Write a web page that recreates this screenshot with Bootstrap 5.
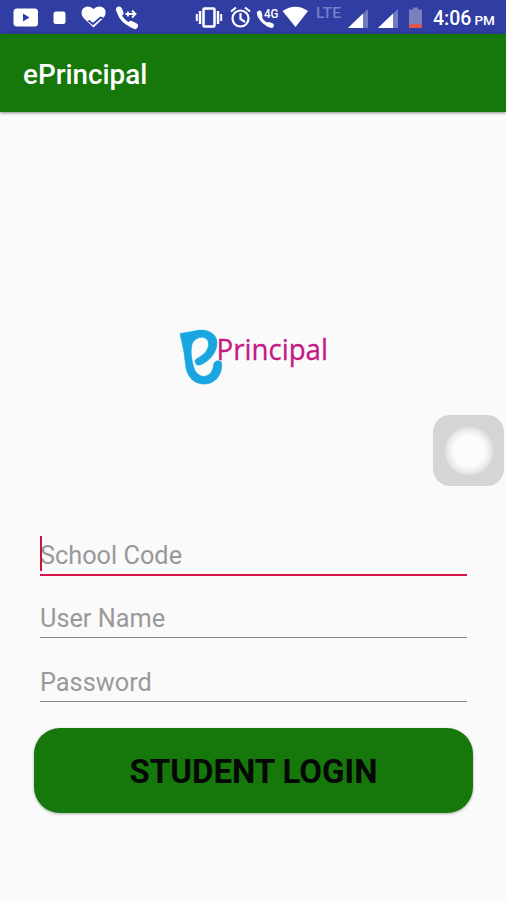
<!DOCTYPE html>
<html lang="en">
<head>
<meta charset="utf-8">
<meta name="viewport" content="width=device-width, initial-scale=1">
<title>ePrincipal</title>
<link href="https://cdn.jsdelivr.net/npm/bootstrap@5.3.0/dist/css/bootstrap.min.css" rel="stylesheet">
<style>
  body { font-family: Roboto, "Liberation Sans", sans-serif; background: #fafafa; height: 900px; overflow: hidden; }
  .status-bar { height: 34px; background: #303da3; padding-left: 12px; }
  .status-bar svg { height: 34px; display: block; flex: none; }
  .clock { font-size: 19.5px; line-height: 34px; font-weight: 500; margin-left: 9px; padding-top: 2px; }
  .clock span { font-size: 13.5px; margin-left: 3px; }
  .app-bar { height: 78px; background: #16780b; padding: 3px 23px 0; box-shadow: 0 1px 3px rgba(0,0,0,.45); }
  .app-title { font-size: 27.8px; font-weight: 500; line-height: 1; }
  .logo-area { height: 418px; padding-top: 213px; }
  .login-form { padding: 0 33px 0 34px; }
  .field { margin: 0 6px 0 6px; height: 64px; position: relative; }
  .field .form-control { height: 45px; font-size: 25.3px; line-height: 38px; color: #444; border-bottom: 1px solid #8a8a8a; padding-top: 7px !important; }
  .field .form-control::placeholder { color: #999; opacity: 1; }
  .field.active { height: 63px; }
  .field.active .form-control { height: 46px; border-bottom: 2px solid #d3154a; padding-top: 6px !important; }
  .field.active::before { content: ""; position: absolute; left: 0; top: 6px; width: 2px; height: 35px; background: #c8153f; z-index: 1; }
  .btn-login, .btn-login:hover { height: 85px; margin-top: 7px; border-radius: 26px; background: #16780b; color: #050805; font-size: 33px; font-weight: 700; padding-top: 9px; box-shadow: 0 1px 3px rgba(0,0,0,.3); }
  .assist { left: 433px; top: 415px; width: 71px; height: 71px; border-radius: 17px; background: #d5d5d5; }
  .assist div { width: 50px; height: 50px; background: radial-gradient(circle, #fcfcfc 0 42%, #f3f3f3 52%, #e5e5e5 64%, #d5d5d5 71%); }
</style>
</head>
<body>
<header>
  <div class="status-bar d-flex text-white">
    <svg width="27" viewBox="12 0 27 34" fill="#fff"><path fill-rule="evenodd" d="M17 8.500H35Q38 8.500 38 12V23Q38 26.500 35 26.500H17Q13.500 26.500 13.500 23V12Q13.500 8.500 17 8.500ZM23 13.500V21.500L29.500 17.500Z"/></svg>
    <svg width="36" viewBox="39 0 36 34"><rect x="53.500" y="11.500" width="12" height="12.500" rx="2.500" fill="#fff"/></svg>
    <svg width="35" viewBox="75 0 35 34"><path d="M93.500 27.500L83.500 18C79 12 83 6.500 88 6.500Q91 6.500 93.500 9Q96 6.500 99 6.500C105 6.500 108 12 103.500 18Z" fill="#fff"/><path d="M88.500 20.500L93 24L100.500 17.500L105 19" fill="none" stroke="#303da3" stroke-width="1.800"/></svg>
    <svg width="80" viewBox="110 0 80 34" fill="none" stroke="#fff"><path d="M119 11C119.500 18 126 24.500 134 25.500" stroke-width="3.500"/><path d="M119 9.500L120.500 13M131 24L135 26" stroke-width="6" stroke-linecap="round"/><path d="M125.500 14H135M128 11.500V16.500M132 10.500L135.500 14L132 17.500" stroke-width="1.800"/></svg>
    <svg width="38" viewBox="190 0 38 34" fill="none" stroke="#fff"><rect x="203.500" y="8.500" width="11" height="18" rx="1" stroke-width="2.500"/><path d="M200 11V24M218 11V24" stroke-width="2.500"/><path d="M196.800 14V21M221.200 14V21" stroke-width="2"/></svg>
    <svg width="26" viewBox="228 0 26 34" fill="none" stroke="#fff" stroke-width="2.200"><circle cx="240.500" cy="18.500" r="8"/><path d="M231 11.500L236 7.500M250 11.500L245 7.500M240.500 13V19L245 22"/></svg>
    <svg width="28" viewBox="254 0 28 34" fill="#fff"><path d="M258.500 12C259 19 265 25 272 26" fill="none" stroke="#fff" stroke-width="3"/><path d="M259.300 13L260 16M268.500 24.500L271.500 25.500" fill="none" stroke="#fff" stroke-width="4.800" stroke-linecap="round"/><text x="264" y="18" font-size="13" font-weight="500" textLength="14.500" lengthAdjust="spacingAndGlyphs">4G</text></svg>
    <svg width="30" viewBox="282 0 30 34"><path d="M282.500 11Q295.500 2.500 308 11L295.500 27Z" fill="#fff"/></svg>
    <svg width="33" viewBox="312 0 33 34"><text x="316" y="18" font-size="14.500" font-weight="500" textLength="25" lengthAdjust="spacingAndGlyphs" fill="#7680c7">LTE</text></svg>
    <svg width="30" viewBox="345 0 30 34"><path d="M368 9V28H348Z" fill="#727bc0"/><path d="M363 13.500V28H348Z" fill="#fff"/></svg>
    <svg width="30" viewBox="375 0 30 34"><path d="M398 9V28H378Z" fill="#727bc0"/><path d="M393 13.500V28H378Z" fill="#fff"/></svg>
    <svg width="19" viewBox="405 0 19 34"><path d="M413 7.500H418V9.500H422V24H409V9.500H413Z" fill="#7b7fbd"/><path d="M409 24H422V28H409Z" fill="#dc594f"/></svg>
    <div class="clock text-nowrap">4:06<span>PM</span></div>
  </div>
  <div class="app-bar d-flex align-items-center text-white"><h1 class="app-title m-0">ePrincipal</h1></div>
</header>
<main>
  <div class="logo-area d-flex justify-content-center align-items-start">
    <svg class="overflow-visible" width="154" height="64" viewBox="176 325 154 64" role="img" aria-label="ePrincipal">
      <path d="M180 333.500Q190 332 197 330.500C208 328.500 216.500 334 217 342C217.500 352 209 362 200 365C195 366 193.500 360.500 197 358.500C204 355 209 350 208.500 343C207.500 335 197 336 193 342C190 347 191 359 194 368C197 377 206 379 211 372.500Q213.500 369 214 363Q217 359 221.500 362C223 374 216 383.500 205 384C195 384.500 188 378 186 368Q184.500 351 180 333.500Z" fill="#18a5e0" stroke="#18a5e0" stroke-width=".6"/>
      <text x="216.500" y="360" font-family="Open Sans, Noto Sans, sans-serif" font-size="29" textLength="111.500" lengthAdjust="spacingAndGlyphs" fill="#c51885" stroke="#c51885" stroke-width=".3">Principal</text>
    </svg>
  </div>
  <form class="login-form">
    <div class="field active"><input class="form-control rounded-0 border-top-0 border-start-0 border-end-0 bg-transparent shadow-none p-0" type="text" placeholder="School Code" aria-label="School Code"></div>
    <div class="field"><input class="form-control rounded-0 border-top-0 border-start-0 border-end-0 bg-transparent shadow-none p-0" type="text" placeholder="User Name" aria-label="User Name"></div>
    <div class="field"><input class="form-control rounded-0 border-top-0 border-start-0 border-end-0 bg-transparent shadow-none p-0" type="password" placeholder="Password" aria-label="Password"></div>
    <button type="button" class="btn btn-login w-100 border-0">STUDENT LOGIN</button>
  </form>
</main>
<div class="assist position-absolute d-flex align-items-center justify-content-center"><div class="rounded-circle"></div></div>
<script src="https://cdn.jsdelivr.net/npm/bootstrap@5.3.0/dist/js/bootstrap.bundle.min.js"></script>
</body>
</html>
